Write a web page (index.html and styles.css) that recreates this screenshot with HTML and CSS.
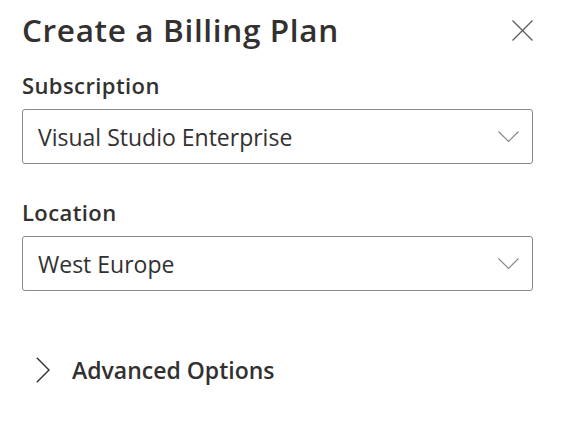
FILE: index.html
```html
<!DOCTYPE html>
<html>
<head>
<meta charset="utf-8">
<link rel="stylesheet" href="styles.css">
</head>
<body>
<div class="panel">
  <div class="header">
    <h1 class="title">Create a Billing Plan</h1>
    <button class="close" aria-label="Close">
      <svg width="21" height="21" viewBox="0 0 21 21"><path d="M0.5 0.5 L20.5 20.5 M20.5 0.5 L0.5 20.5" stroke="#605e5c" stroke-width="1.3" fill="none"/></svg>
    </button>
  </div>
  <div class="field">
    <div class="label">Subscription</div>
    <div class="select">
      <span class="value">Visual Studio Enterprise</span>
      <svg class="chev" width="21" height="11" viewBox="0 0 21 11"><path d="M0.5 0.5 L10.5 10.5 L20.5 0.5" stroke="#8a8886" stroke-width="1.1" fill="none"/></svg>
    </div>
  </div>
  <div class="field">
    <div class="label">Location</div>
    <div class="select">
      <span class="value">West Europe</span>
      <svg class="chev" width="21" height="11" viewBox="0 0 21 11"><path d="M0.5 0.5 L10.5 10.5 L20.5 0.5" stroke="#8a8886" stroke-width="1.1" fill="none"/></svg>
    </div>
  </div>
  <div class="advanced">
    <svg class="chev-right" width="14" height="26" viewBox="0 0 14 26"><path d="M0.8 0.8 L13 13 L0.8 25.2" stroke="#323130" stroke-width="1.4" fill="none"/></svg>
    <span class="adv-text">Advanced Options</span>
  </div>
</div>
</body>
</html>
```
FILE: styles.css
```css
html, body {
  margin: 0;
  padding: 0;
  background: #ffffff;
}
body {
  font-family: "Open Sans", "Noto Sans", sans-serif;
  color: #323130;
}
.panel {
  padding: 0 31px 0 22px;
  width: 511px;
}
.header {
  display: flex;
  justify-content: space-between;
  align-items: center;
  height: 59px;
}
.title {
  margin: 0;
  font-size: 31.5px;
  font-weight: 600;
  line-height: 40px;
  letter-spacing: 0.65px;
}
.close {
  border: none;
  background: none;
  padding: 0;
  width: 21px;
  height: 21px;
  display: flex;
  margin-top: 2px;
}
.field {
  display: flex;
  flex-direction: column;
  margin-top: 11px;
}
.field + .field {
  margin-top: 33px;
}
.label {
  font-size: 22px;
  font-weight: 600;
  line-height: 30px;
  margin-bottom: 9px;
  letter-spacing: 0.4px;
}
.select {
  box-sizing: border-box;
  height: 55px;
  border: 1px solid #8a8886;
  border-radius: 3px;
  display: flex;
  align-items: center;
  justify-content: space-between;
  padding: 0 13px 0 15px;
}
.value {
  font-size: 23px;
  line-height: 30px;
}
.chev {
  display: block;
}
.advanced {
  display: flex;
  align-items: center;
  margin-top: 63px;
  padding-left: 14px;
}
.chev-right {
  display: block;
}
.adv-text {
  margin-left: 22px;
  font-size: 23px;
  font-weight: 600;
}
```
